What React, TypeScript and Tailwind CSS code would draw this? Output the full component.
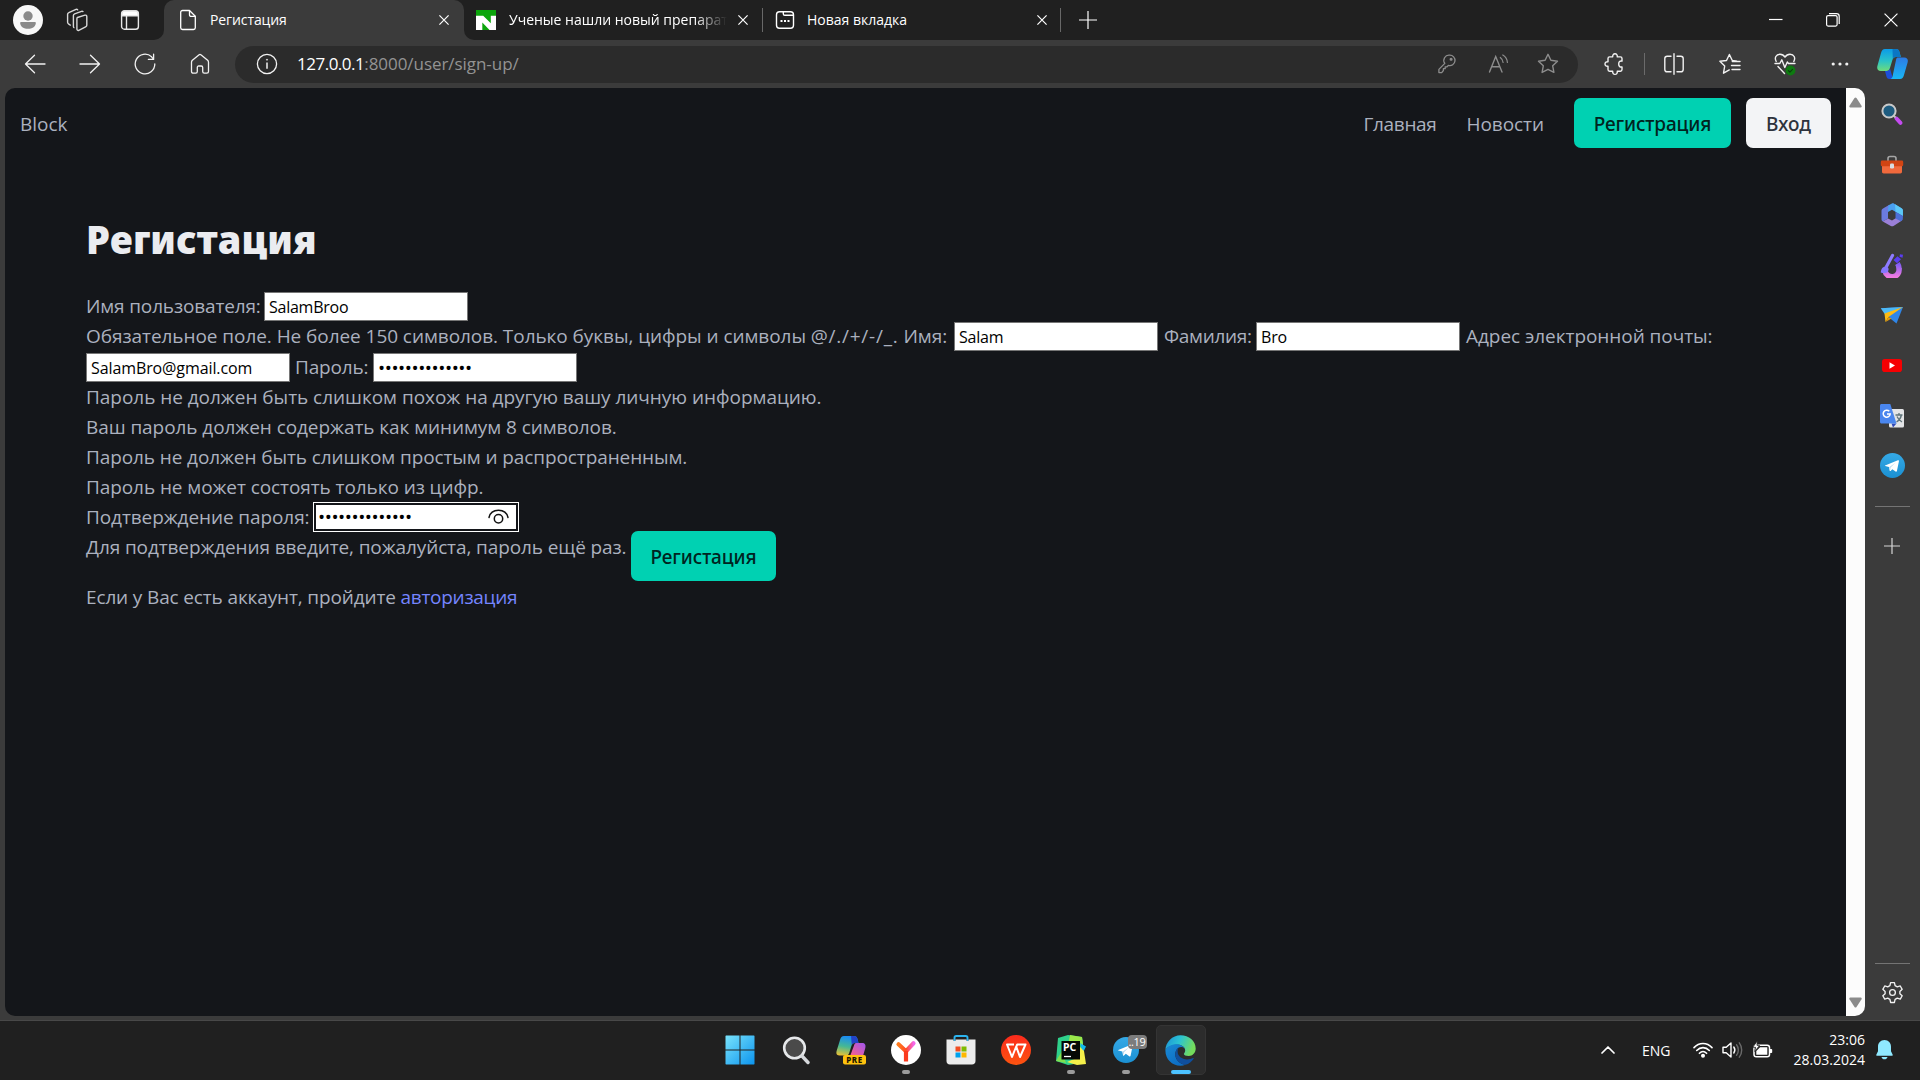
import type { ReactNode, SVGProps } from "react";

/* ---------- helpers ---------- */

function Line({ size = 20, children, ...rest }: { size?: number; children: ReactNode } & SVGProps<SVGSVGElement>) {
  return (
    <svg
      width={size}
      height={size}
      viewBox="0 0 24 24"
      fill="none"
      stroke="currentColor"
      strokeWidth={1.5}
      strokeLinecap="round"
      strokeLinejoin="round"
      className="shrink-0"
      {...rest}
    >
      {children}
    </svg>
  );
}

function Cross({ size = 10, width = 1.2 }: { size?: number; width?: number }) {
  return (
    <svg width={size} height={size} viewBox="0 0 10 10" stroke="#fff" strokeWidth={width} className="shrink-0">
      <path d="M0.4 0.4 9.6 9.6M9.6 0.4 0.4 9.6" />
    </svg>
  );
}

/* ---------- tab strip ---------- */

function TabStrip() {
  return (
    <div className="flex h-10 bg-linear-to-b from-[#202020] from-50% to-[#3b3b3b] to-50% text-white">
      <div className="flex w-[164px] shrink-0 items-center rounded-br-[10px] bg-[#202020] pl-[13px]">
        <svg width="30" height="30" viewBox="0 0 30 30">
          <circle cx="15" cy="15" r="15" fill="#f8f8f8" />
          <circle cx="15" cy="11" r="4.7" fill="#8a8a8a" />
          <path d="M8.2 17h13.6c.8 0 1.2.6 1 1.4-.6 3.6-3.6 5.300-7.800 5.300s-7.200-1.700-7.800-5.300c-.2-.8.2-1.400 1-1.400z" fill="#8a8a8a" />
        </svg>
        <svg width="22" height="24" viewBox="0 0 22 24" fill="none" stroke="#d8d8d8" strokeWidth="1.4" strokeLinejoin="round" className="ml-[23px]">
          <path d="M11.400 9.500 19 7.200c1-.3 1.800.3 1.800 1.200v8.900c0 .8-.5 1.300-1.200 1.600l-6.800 3.400c-1 .4-1.900-.1-1.900-1.200V10.700c0-.6 0-1 .5-1.200z" />
          <path d="M8.400 19.800c-.8-.2-1-.7-1-1.400V7.500c0-.9.400-1.400 1.200-1.700L15.500 3.300c.9-.3 1.500.1 1.600.9" />
          <path d="M4.800 17.500l-2-1.400c-.8-.5-1.200-1-1.200-1.800V6.300c0-.9.400-1.400 1.200-1.700L10 1.400c.9-.3 1.600 0 1.700.9" />
        </svg>
        <svg width="20" height="22" viewBox="0 0 20 22" fill="none" stroke="#e8e8e8" strokeWidth="1.4" className="ml-[32px]">
          <rect x="1.600" y="2" width="16.800" height="18.200" rx="2.800" />
          <path d="M2 4.500C2 3 3 2 4.500 2h11C17 2 18 3 18 4.500v2.300H2z" fill="#fff" />
          <path d="M6.500 7v13" />
        </svg>
      </div>

      <div className="flex w-[300px] shrink-0 items-center rounded-t-[10px] bg-[#3b3b3b] pr-[15px] pl-[15px]">
        <svg width="18" height="22" viewBox="0 0 18 22" fill="none" stroke="#fff" strokeWidth="1.300" strokeLinejoin="round">
          <path d="M10.500 1.500H3.500c-1 0-1.800.7-1.800 1.700v15.600c0 1 .8 1.700 1.800 1.700h11c1 0 1.800-.7 1.800-1.700V7.300z" />
          <path d="M10.500 1.500v4.300c0 1 .6 1.500 1.500 1.500h4.300" />
        </svg>
        <span className="ml-[13px] pb-[2px] text-[14px] tracking-[-0.1px]">Регистация</span>
        <span className="ml-auto flex">
          <Cross />
        </span>
      </div>

      <div className="flex grow rounded-bl-[10px] bg-[#202020]">
        <div className="flex w-[298px] items-center pr-[14px] pl-[12px]">
          <svg width="20" height="20" viewBox="0 0 20 20" className="shrink-0">
            <path d="M0 0h20v20H0z" fill="#fff" />
            <path d="M0 0h20v5.800h-5.200v7.400L7.200 5.800H0z" fill="#0ba50b" />
            <path d="M6.300 12.500 13.500 20H6.300z" fill="#0ba50b" />
          </svg>
          <span className="ml-[13px] w-[218px] overflow-hidden mask-r-from-85% pb-[2px] text-[14px] whitespace-nowrap">
            Ученые нашли новый препарат
          </span>
          <span className="ml-auto flex">
            <Cross />
          </span>
        </div>

        <div className="my-2 w-px bg-[#686868]" />

        <div className="flex w-[297px] items-center pr-[13px] pl-[12px]">
          <svg width="20" height="20" viewBox="0 0 20 20" fill="none" stroke="#fff" strokeWidth="1.400">
            <rect x="1.500" y="1.800" width="17" height="16.400" rx="3" />
            <path d="M8.300 2v1.700c0 1 .5 1.600 1.500 1.600h8.400" />
            <path d="M5.500 11h2M9 11h2M12.500 11h2" strokeWidth="1.800" />
          </svg>
          <span className="ml-[12px] pb-[2px] text-[14px]">Новая вкладка</span>
          <span className="ml-auto flex">
            <Cross />
          </span>
        </div>

        <div className="my-2 w-px bg-[#686868]" />

        <div className="ml-[18px] flex items-center">
          <svg width="18" height="18" viewBox="0 0 18 18" stroke="#fff" strokeWidth="1.200">
            <path d="M9 0v18M0 9h18" />
          </svg>
        </div>

        <div className="ml-auto flex items-center pr-[22px]">
          <svg width="14" height="14" viewBox="0 0 14 14" stroke="#fff">
            <path d="M0 6.500h13.500" strokeWidth="1.200" />
          </svg>
          <svg width="14" height="14" viewBox="0 0 14 14" fill="none" stroke="#fff" strokeWidth="1.200" className="ml-[43px]">
            <rect x=".6" y="2.600" width="10.500" height="10.500" rx="1.500" />
            <path d="M3 .6h7.500c1.600 0 2.700 1 2.700 2.700V11" />
          </svg>
          <span className="ml-[44px] flex">
            <Cross size={14} width={0.85} />
          </span>
        </div>
      </div>
    </div>
  );
}

/* ---------- toolbar ---------- */

function Slot({ className, children }: { className: string; children: ReactNode }) {
  return <div className={"flex shrink-0 items-center justify-center " + className}>{children}</div>;
}

function Toolbar() {
  return (
    <div className="flex h-12 items-center bg-[#3b3b3b] pl-[7px] text-white">
      <Slot className="w-[55px]">
        <svg width="22" height="22" viewBox="0 0 22 22" fill="none" stroke="#f2f2f2" strokeWidth="1.300" strokeLinecap="round" strokeLinejoin="round">
          <path d="M21 11H1.500M10.500 2.200 1.500 11l9 8.800" />
        </svg>
      </Slot>
      <Slot className="w-[55px]">
        <svg width="22" height="22" viewBox="0 0 22 22" fill="none" stroke="#f2f2f2" strokeWidth="1.300" strokeLinecap="round" strokeLinejoin="round">
          <path d="M1 11h19.500M11.500 2.200l9 8.800-9 8.800" />
        </svg>
      </Slot>
      <Slot className="w-[55px]">
        <svg width="22" height="22" viewBox="0 0 22 22" fill="none" stroke="#f2f2f2" strokeWidth="1.300" strokeLinecap="round" strokeLinejoin="round">
          <path d="M20.800 11A9.800 9.800 0 1 1 17.600 3.800L19.300 6" />
          <path d="M19.600 1.200v5.200h-5.200" />
        </svg>
      </Slot>
      <Slot className="w-[55px]">
        <svg width="20" height="22" viewBox="0 0 20 22" fill="none" stroke="#f2f2f2" strokeWidth="1.300" strokeLinejoin="round">
          <path d="M1.500 9.200c0-.8.300-1.400.9-1.900L8.800 1.900c.8-.7 1.600-.7 2.400 0l6.400 5.400c.6.500.9 1.100.9 1.900v9.300c0 1-.7 1.700-1.700 1.700h-2.500c-1 0-1.600-.7-1.600-1.600v-4.200c0-.9-.5-1.400-1.400-1.400H8.700c-.9 0-1.400.5-1.400 1.400v4.200c0 .9-.6 1.600-1.600 1.600H3.200c-1 0-1.700-.7-1.700-1.700z" />
        </svg>
      </Slot>

      <div className="ml-[8px] flex h-[37px] w-[1343px] shrink-0 items-center rounded-full bg-[#2b2b2b] pr-[6px] pl-[21px]">
        <svg width="22" height="22" viewBox="0 0 22 22" fill="none" stroke="#f2f2f2" strokeWidth="1.300">
          <circle cx="11" cy="11" r="9.600" />
          <path d="M11 9.500v6.200" strokeWidth="1.500" />
          <circle cx="11" cy="6.700" r=".6" fill="#f2f2f2" strokeWidth=".6" />
        </svg>
        <span className="ml-[19px] text-[17px] text-white">
          <span className="tracking-[-0.5px]">127.0.0.1</span>
          <span className="tracking-[-0.05px] text-[#939393]">:8000/user/sign-up/</span>
        </span>
        <div className="ml-auto flex text-[#8d8d8d]">
          <Slot className="w-[50px]">
            <svg width="18" height="20" viewBox="0 0 18 20" fill="none" stroke="currentColor" strokeWidth="1.300" strokeLinejoin="round">
              <path d="M11.600 1.200a5.200 5.200 0 1 1-1.200 10.200L9 12.800H7.200v1.900H5.400v1.800L3.700 18.600H.9v-3.200l5.900-6A5.200 5.200 0 0 1 11.600 1.200z" />
              <circle cx="13.100" cy="5.300" r=".9" fill="currentColor" />
            </svg>
          </Slot>
          <Slot className="w-[50px] pl-[3px]">
            <svg width="22" height="20" viewBox="0 0 22 20" fill="none" stroke="currentColor" strokeWidth="1.400" strokeLinecap="round">
              <path d="M1.500 18 7.700 2.500 14 18M3.600 12.700h8.300" />
              <path d="M12.300 3.500c1.800 1.400 2.700 3 2.800 5M14.800 1c2.900 1.700 4.400 4.200 4.600 7.500" strokeWidth="1.200" />
            </svg>
          </Slot>
          <Slot className="w-[50px] pl-px">
            <Line size={24} strokeWidth={1.4}>
              <path d="M12 2.300l2.900 6 6.600.9-4.800 4.600 1.200 6.600L12 17.300l-5.900 3.100 1.200-6.600L2.500 9.200l6.600-.9z" />
            </Line>
          </Slot>
        </div>
      </div>

      <Slot className="ml-[11px] w-[50px]">
        <svg width="21" height="24" viewBox="0 0 21 24" fill="none" stroke="#f2f2f2" strokeWidth="1.400" strokeLinejoin="round">
          <path d="M18 9V6.500c0-1-.6-1.600-1.600-1.600h-3.100c.2-2-.8-3.200-2.300-3.200S8.500 2.900 8.700 4.900H5.600C4.600 4.900 4 5.500 4 6.500v3.200C2 9.500 1 10.600 1 12s1 2.500 3 2.300v3.300c0 1 .6 1.600 1.600 1.600h3.100c-.2 2 .8 3.200 2.300 3.200s2.500-1.200 2.300-3.200h3.100c1 0 1.600-.6 1.600-1.600V15c-2.200.4-3.300-1-3.300-3s1.100-3.400 3.300-3z" />
        </svg>
      </Slot>
      <div className="ml-[5px] h-[22px] w-px shrink-0 bg-[#6b6b6b]" />
      <Slot className="w-[57px]">
        <svg width="20" height="22" viewBox="0 0 20 22" fill="none" stroke="#f2f2f2" strokeWidth="1.400" strokeLinecap="round">
          <path d="M10 .8v20.400M7 3.200H3.200C1.700 3.200.8 4.100.8 5.600v10.800c0 1.500.9 2.400 2.400 2.400H7M13 3.200h3.800c1.500 0 2.400.9 2.400 2.400v10.800c0 1.500-.9 2.400-2.400 2.400H13" />
        </svg>
      </Slot>
      <Slot className="w-[56px]">
        <svg width="22" height="22" viewBox="0 0 22 22" fill="none" stroke="#f2f2f2" strokeWidth="1.400" strokeLinecap="round" strokeLinejoin="round">
          <path d="M17.500 8.200 13.300 7.500 10.400 1.500 7.500 7.500.9 8.300l4.800 4.700-1.200 7.200 5.800-3.300" />
          <path d="M13.300 8.500H21M12.500 12.500H21M13 16.500h8" />
        </svg>
      </Slot>
      <Slot className="w-[54px]">
        <svg width="22" height="24" viewBox="0 0 22 24" fill="none" stroke="#f2f2f2" strokeWidth="1.400" strokeLinecap="round" strokeLinejoin="round">
          <path d="M2.200 9.500C.2 6 2 2.200 6 2.200c2.200 0 3.800 1 5 2.900 1.200-1.900 2.800-2.900 5-2.900 4 0 5.800 3.800 3.800 7.300" />
          <path d="M1 11.500h4.800l2-3.700 3 7.700 2.500-5.500 1.200 1.500H21M4 14.500l6.500 7" />
          <circle cx="16.500" cy="18.500" r="4.900" fill="#0e7a10" stroke="none" />
          <path d="M14.400 18.600l1.500 1.500 2.600-2.800" stroke="#0a3d0c" strokeWidth="1.100" />
        </svg>
      </Slot>
      <Slot className="w-[56px]">
        <svg width="18" height="4" viewBox="0 0 18 4" fill="#f2f2f2">
          <circle cx="2.200" cy="2" r="1.600" />
          <circle cx="9" cy="2" r="1.600" />
          <circle cx="15.800" cy="2" r="1.600" />
        </svg>
      </Slot>
      <Slot className="w-[48px]">
        <svg width="31" height="31" viewBox="0 0 31 31">
          <defs>
            <linearGradient id="cp1" x1="0" y1="0" x2="0" y2="1">
              <stop offset="0" stopColor="#0c9be8" />
              <stop offset=".55" stopColor="#2ac3c8" />
              <stop offset="1" stopColor="#6fdc7a" />
            </linearGradient>
            <linearGradient id="cp2" x1="0" y1="0" x2="0" y2="1">
              <stop offset="0" stopColor="#2d7be5" />
              <stop offset="1" stopColor="#19b7f5" />
            </linearGradient>
          </defs>
          <path d="M8 0h11c2 0 3 1 3.500 3l1.300 5H19c-2 0-3 1-3.600 3l-2.600 8.500c-.6 1.700-1.500 2.500-3.300 2.500H3.800C.8 22-.3 20 .4 17L4 4C4.800 1.200 5.800 0 8 0z" fill="url(#cp1)" />
          <path d="M15.500 0H19c2 0 3 1 3.500 3l1.300 5H19c-1.500 0-2.500.6-3.200 2z" fill="#0b76c4" />
          <path d="M8 22h2c1.500 0 2.500-1 3-2.500L16 30h-3.500c-2 0-2.700-1-3.200-3z" fill="#1d4fd8" />
          <path d="M20.500 8.500h6.700c3 0 4.200 2 3.400 5L27 26c-.8 2.800-1.800 4-4 4H12.500c1.500 0 2.400-.8 3-2.600L19 11c.3-1.400.8-2.200 1.500-2.500z" fill="url(#cp2)" />
        </svg>
      </Slot>
    </div>
  );
}

/* ---------- web page ---------- */

function Field({ className, children }: { className: string; children: ReactNode }) {
  return (
    <span className={"flex h-[29px] shrink-0 items-center border border-[#767676] bg-white pl-[4px] text-[16px] leading-[26px] text-black " + className}>
      {children}
    </span>
  );
}

function Dots() {
  return <span className="text-[19px] tracking-[-0.45px]">••••••••••••••</span>;
}

function SignUpPage() {
  return (
    <div className="h-[928px] w-[1841px] rounded-l-[10px] bg-[#14161a] text-[19px] leading-[30px] text-[#abb1bf]">
      <nav className="flex h-[70px] items-center pr-[15px] pl-[15px]">
        <span className="pt-px">Block</span>
        <span className="ml-auto pt-px tracking-[-0.35px]">Главная</span>
        <span className="ml-[30px] pt-px tracking-[-0.05px]">Новости</span>
        <span className="ml-[30px] flex h-[50px] w-[157px] items-center justify-center rounded-[7px] bg-[#00d1b2] pt-[2px] font-['Noto_Sans'] font-medium tracking-[-0.1px] text-[#00241f]">
          Регистрация
        </span>
        <span className="ml-[15px] flex h-[50px] w-[85px] items-center justify-center rounded-[7px] bg-[#f3f4f6] pt-[2px] font-['Noto_Sans'] font-medium text-[#2e333d]">
          Вход
        </span>
      </nav>

      <main className="pt-[56px] pl-[81px] whitespace-nowrap">
        <h1 className="h-[77px] font-['Noto_Sans'] text-[38px] leading-[50px] font-black tracking-[0.12px] text-[#ebecf0]">Регистация</h1>

        <div className="flex h-[30px] items-center">
          <span className="w-[178px] tracking-[-0.15px]">Имя пользователя:</span>
          <Field className="w-[204px]">
            <span className="pt-px tracking-[-0.25px]">SalamBroo</span>
          </Field>
        </div>
        <div className="flex h-[31px] items-start">
          <span className="w-[868px]">
            <span className="tracking-[-0.06px]">Обязательное поле. Не более 150 символов. Только буквы, цифры и символы </span>
            <span className="tracking-[0.75px]">@/./+/-/_.</span> Имя:
          </span>
          <Field className="mt-px w-[204px]">
            <span className="tracking-[-0.2px]">Salam</span>
          </Field>
          <span className="ml-[6px] w-[92px] tracking-[-0.3px]">Фамилия:</span>
          <Field className="mt-px w-[204px]">
            <span className="tracking-[-0.2px]">Bro</span>
          </Field>
          <span className="ml-[6px] tracking-[-0.05px]">Адрес электронной почты:</span>
        </div>
        <div className="flex h-[30px] items-center">
          <Field className="mt-px w-[204px]">
            <span className="tracking-[-0.1px]">SalamBro@gmail.com</span>
          </Field>
          <span className="ml-[5px] w-[78px] tracking-[-0.15px]">Пароль:</span>
          <Field className="mt-px w-[204px]">
            <Dots />
          </Field>
        </div>
        <p className="tracking-[-0.035px]">Пароль не должен быть слишком похож на другую вашу личную информацию.</p>
        <p className="tracking-[-0.07px]">Ваш пароль должен содержать как минимум 8 символов.</p>
        <p className="tracking-[-0.1px]">Пароль не должен быть слишком простым и распространенным.</p>
        <p className="tracking-[-0.08px]">Пароль не может состоять только из цифр.</p>
        <div className="flex h-[30px] items-center">
          <span className="w-[230px] tracking-[-0.09px]">Подтверждение пароля:</span>
          <span className="flex h-[24px] w-[200px] items-center bg-white pr-[7px] pl-[2px] text-black outline-1 outline-offset-2 outline-white">
            <Dots />
            <svg width="21" height="16" viewBox="0 0 21 16" fill="none" stroke="#111" strokeWidth="1.500" strokeLinecap="round" className="ml-auto">
              <path d="M1 8.500C2 4 5.500 1.300 10.500 1.300S19 4 20 8.500" />
              <circle cx="10.500" cy="9.700" r="4.200" />
            </svg>
          </span>
        </div>
        <div className="flex h-[50px] items-start">
          <span className="w-[545px] tracking-[-0.11px]">Для подтверждения введите, пожалуйста, пароль ещё раз.</span>
          <span className="-mt-px flex h-[50px] w-[145px] items-center justify-center rounded-[7px] bg-[#00d1b2] pt-[2px] font-['Noto_Sans'] font-medium tracking-[-0.1px] text-[#00241f]">
            Регистация
          </span>
        </div>
        <p className="tracking-[-0.14px]">
          Если у Вас есть аккаунт, пройдите <span className="tracking-[-0.28px] text-[#7585ff]">авторизация</span>
        </p>
      </main>
    </div>
  );
}

function Scrollbar() {
  return (
    <div className="flex h-[928px] w-[19px] flex-col items-center justify-between rounded-r-[10px] bg-[#fcfcfc] pt-[9px] pb-[8px]">
      <svg width="13" height="11" viewBox="0 0 13 11" fill="#8b8b8b">
        <path d="M5.500 1c.6-.8 1.400-.8 2 0l5 7.800c.5.900.1 1.700-.9 1.700H1.400c-1 0-1.400-.8-.9-1.700z" />
      </svg>
      <svg width="13" height="11" viewBox="0 0 13 11" fill="#8b8b8b">
        <path d="M5.500 10c.6.8 1.400.8 2 0l5-7.800c.5-.9.1-1.700-.9-1.700H1.400c-1 0-1.400.8-.9 1.700z" />
      </svg>
    </div>
  );
}

/* ---------- browser sidebar ---------- */

function TelegramMark({ size, id }: { size: number; id: string }) {
  return (
    <svg width={size} height={size} viewBox="0 0 26 26" className="shrink-0">
      <defs>
        <linearGradient id={id} x1="0" y1="0" x2="0" y2="1">
          <stop offset="0" stopColor="#35a9e6" />
          <stop offset="1" stopColor="#1b90d2" />
        </linearGradient>
      </defs>
      <circle cx="13" cy="13" r="13" fill={"url(#" + id + ")"} />
      <path d="M5.300 12.900 18.600 7.500c.7-.3 1.300.2 1.100 1l-2.100 10.300c-.2.800-.8 1-1.400.5l-3.400-2.500-1.800 1.800c-.5.400-.9.200-1-.4l-.7-3.600-3.900-1.200c-.7-.2-.8-.3-.1-.5z" fill="#fff" />
      <path d="M9.500 14.700 16.300 10 11 15.200l-.4 2.700z" fill="#b9d9ef" />
    </svg>
  );
}

function Sidebar() {
  return (
    <aside className="flex w-[55px] flex-col items-center bg-[#3b3b3b] pr-px">
      <Slot className="mt-px h-[50px]">
        <svg width="24" height="24" viewBox="0 0 24 24" fill="none">
          <path d="M16.500 16.500 20.500 20.800" stroke="#c44bf0" strokeWidth="4" strokeLinecap="round" />
          <path d="M13.500 13.500l2 2" stroke="#bdbdbd" strokeWidth="2" />
          <circle cx="9" cy="9" r="6.600" fill="#1e5c80" stroke="#c9c9c9" strokeWidth="2" />
        </svg>
      </Slot>
      <Slot className="h-[51px]">
        <svg width="24" height="20" viewBox="0 0 24 20">
          <path d="M8 6V3.500C8 2.300 8.800 1.500 10 1.500h4c1.200 0 2 .8 2 2V6" fill="none" stroke="#a6a6a6" strokeWidth="1.600" />
          <path d="M2 9h20v7.700c0 1-.7 1.700-1.700 1.700H3.700c-1 0-1.700-.7-1.700-1.700z" fill="#f0693c" />
          <rect x=".8" y="5.500" width="22.400" height="5.800" rx="1.400" fill="#d14413" />
          <rect x="10" y="8.500" width="4" height="5" rx="1.200" fill="#d9dde0" />
        </svg>
      </Slot>
      <Slot className="h-[50px]">
        <svg width="22" height="24" viewBox="0 0 22 24">
          <path d="M7 2.500 10.500.7c1-.5 1.800-.4 2.700.1l7.300 4.400c1 .6 1.400 1.300 1.400 2.400V13l-7.400-4.300L11 6.700 7 9z" fill="#4a9ff0" />
          <path d="M14 1.300l6.500 3.900c1 .6 1.400 1.300 1.400 2.400V13l-7.400-4.300z" fill="#5cc8f7" />
          <path d="M8 2 2 5.600C1 6.200.5 7 .5 8.100v8.200c0 1 .5 1.800 1.300 2.300L7 15.500v-8C7 5 7.400 3.200 8 2z" fill="#6b7be0" />
          <path d="M1.800 18.600 7 15.500l4 2 4.500-2.700 6 1.200c-.3 1-.9 1.800-1.700 2.300l-7.300 4.600c-.9.500-1.700.5-2.700 0z" fill="#9b80d8" />
          <path d="M14.500 8.700 21.900 13v2c0 1.500-.8 2.800-2 3.300L14.500 15.500z" fill="#4c6fd6" />
        </svg>
      </Slot>
      <Slot className="h-[50px]">
        <svg width="24" height="26" viewBox="0 0 24 26" fill="none">
          <defs>
            <linearGradient id="paint" x1="0" y1="0" x2="0" y2="1">
              <stop offset="0" stopColor="#7c5cf5" />
              <stop offset="1" stopColor="#f07be0" />
            </linearGradient>
          </defs>
          <path d="M5 19a7 7 0 0 0 14-2.500c0-2-.6-3.600-1.600-5" stroke="url(#paint)" strokeWidth="5.500" />
          <path d="M12.500 3.500 6.500 14.500" stroke="#8e7bff" strokeWidth="3.200" strokeLinecap="round" />
          <path d="M.8 20.500c.3-3.800 1.900-6 5-6 2.600 0 3.700 2.900 2.100 4.900-1.500 1.800-4.400 2-7.100 1.100z" fill="#8577ff" />
          <path d="M13.500 8l4-3.800 3.500 3-4 4zM20 2.200l3 .5-.5 3-3-1z" fill="#5a3df0" />
        </svg>
      </Slot>
      <Slot className="h-[50px]">
        <svg width="24" height="20" viewBox="0 0 24 20">
          <path d="M.8 3.200 23 2 16.500 18.500l-5-4z" fill="#2f86e8" />
          <path d="M.8 3.200 23 2 5 9.500z" fill="#4db9f6" />
          <path d="M4.500 8.500 23 2 8.500 12 5.500 17z" fill="#fdbb13" />
          <path d="M5.500 17l6-3.500L8.500 12z" fill="#e39a0c" />
        </svg>
      </Slot>
      <Slot className="h-[51px]">
        <svg width="20" height="13" viewBox="0 0 20 13">
          <rect width="20" height="13" rx="2.800" fill="#f60002" />
          <path d="M7.500 3.300 13 6.500 7.500 9.700z" fill="#fff" />
        </svg>
      </Slot>
      <Slot className="h-[49px]">
        <svg width="24" height="24" viewBox="0 0 24 24">
          <rect x="9" y="5" width="15" height="18.500" rx="1.500" fill="#e3e4e6" />
          <path d="M15.500 11h7M19 9v2M21.500 11c-.7 3-2.500 5.500-5 7M17 12.500c1 2.300 2.600 4.200 5 5.500" stroke="#5f7379" strokeWidth="1.300" fill="none" />
          <path d="M11.500 19.500h5L13 23.500z" fill="#2f48b8" />
          <path d="M1.500 0h8.800l6.200 19.500h-15C.6 19.500 0 18.900 0 18V1.500C0 .6.600 0 1.500 0z" fill="#4a86ee" />
          <path d="M9.300 7.300A3.500 3.500 0 1 0 10.200 10H7" fill="none" stroke="#fff" strokeWidth="1.500" />
        </svg>
      </Slot>
      <Slot className="h-[50px]">
        <TelegramMark size={25} id="telegramSide" />
      </Slot>
      <div className="mt-[16px] h-px w-[35px] bg-[#747474]" />
      <Slot className="mt-[31px] h-[16px]">
        <svg width="16" height="16" viewBox="0 0 16 16" stroke="#d6d6d6" strokeWidth="1.200">
          <path d="M8 0v16M0 8h16" />
        </svg>
      </Slot>
      <div className="mt-auto mb-[17px] h-px w-[35px] bg-[#747474]" />
      <div className="mb-[16px] flex">
        <Line size={23} stroke="#f2f2f2" strokeWidth={1.4}>
          <path d="M10 1.700h4l.7 3.200 2.300 1.300 3.100-1 2 3.500L19.700 11v2.200l2.400 2.200-2 3.500-3.100-1-2.300 1.300-.7 3.200h-4l-.7-3.200L7 17.900l-3.100 1-2-3.500 2.400-2.200V11L1.900 8.700l2-3.500 3.100 1 2.300-1.300z" />
          <circle cx="12" cy="12" r="3" />
        </Line>
      </div>
    </aside>
  );
}

/* ---------- taskbar ---------- */

function TaskItem({ mark, active, children }: { mark?: boolean; active?: boolean; children: ReactNode }) {
  return (
    <div className="flex w-[55px] shrink-0 justify-center">
      <div
        className={
          active
            ? "relative flex h-[50px] w-[50px] items-center justify-center rounded-[5px] border border-[#343434] bg-[#2c2c2c]"
            : "relative flex h-[50px] w-[50px] items-center justify-center"
        }
      >
        {children}
        {mark && <span className="absolute bottom-[1px] h-[4px] w-[8px] rounded-full bg-[#9b9b9b]" />}
        {active && <span className="absolute bottom-0 h-[4px] w-[20px] rounded-full bg-[#4cc2ff]" />}
      </div>
    </div>
  );
}

function Taskbar() {
  return (
    <footer className="flex h-[60px] items-center border-t border-[#484848] bg-[#202020] pb-px text-[14px] text-white">
      <div className="flex w-[1208px] justify-end">
        <TaskItem>
          <svg width="30" height="30" viewBox="0 0 30 30" className="-ml-px">
            <defs>
              <linearGradient id="win" gradientUnits="userSpaceOnUse" x1="0" y1="0" x2="30" y2="30">
                <stop offset="0" stopColor="#7be4fb" />
                <stop offset="1" stopColor="#0a93ee" />
              </linearGradient>
            </defs>
            <path d="M1 .5h13.500v14H.5V1zM15.500.5H29l.5.500v13.500h-14zM.5 15.500h14v14H1L.5 29zM15.500 15.500h14V29l-.5.500H15.500z" fill="url(#win)" />
          </svg>
        </TaskItem>
        <TaskItem>
          <svg width="28" height="29" viewBox="0 0 28 29" fill="none">
            <circle cx="12.500" cy="12" r="10.300" fill="#4a4a4a" stroke="#e6e8ea" strokeWidth="2.600" />
            <path d="M20 20l6 6.500" stroke="#d5d8dc" strokeWidth="3.400" strokeLinecap="round" />
          </svg>
        </TaskItem>
        <TaskItem>
          <svg width="30" height="30" viewBox="0 0 30 30">
            <defs>
              <linearGradient id="pa" x1=".3" y1="0" x2=".1" y2="1">
                <stop offset="0" stopColor="#1b8df0" />
                <stop offset=".5" stopColor="#45b894" />
                <stop offset="1" stopColor="#f2c230" />
              </linearGradient>
              <linearGradient id="pb" x1="1" y1="0" x2="0" y2="1">
                <stop offset="0" stopColor="#a055f0" />
                <stop offset="1" stopColor="#f7628c" />
              </linearGradient>
            </defs>
            <path d="M8 1h10c2 0 3 1 3.500 3l1 4H19c-2 0-3 1-3.600 3l-2.200 7c-.6 1.700-1.500 2.500-3.300 2.500H3.500C.8 20.500-.1 19 .6 16L4 5c.8-2.800 1.800-4 4-4z" fill="url(#pa)" />
            <path d="M15 1h3c2 0 3 1 3.500 3l1 4H19c-1.500 0-2.500.6-3.200 2z" fill="#2242c7" />
            <path d="M20 8h6c3 0 4 2 3.300 5l-2 7H14.500L18 10.500c.4-1.400 1-2.200 2-2.500z" fill="url(#pb)" />
            <rect x="7" y="20" width="23" height="9.500" rx="2" fill="#ffc20e" />
            <text x="18.500" y="27.700" textAnchor="middle" fontSize="8" fontWeight="800" fill="#1b1500" fontFamily="Noto Sans" letterSpacing=".5">
              PRE
            </text>
          </svg>
        </TaskItem>
        <TaskItem mark>
          <svg width="30" height="30" viewBox="0 0 30 30" fill="none">
            <defs>
              <linearGradient id="ya" x1="0" y1="0" x2="1" y2="0">
                <stop offset="0" stopColor="#ff7a1a" />
                <stop offset=".5" stopColor="#ff4a24" />
                <stop offset="1" stopColor="#f566e8" />
              </linearGradient>
            </defs>
            <circle cx="15" cy="15" r="15" fill="#fff" />
            <path d="M7.500 9.300 15 16.200 22.500 8.300" stroke="url(#ya)" strokeWidth="4.200" strokeLinecap="round" strokeLinejoin="round" />
            <path d="M15 16v10.500" stroke="#fb3a1e" strokeWidth="4.200" />
          </svg>
        </TaskItem>
        <TaskItem>
          <svg width="30" height="30" viewBox="0 0 30 30">
            <path d="M8.500 6V2.800C8.500 1.600 9 1 10.200 1h9.600c1.200 0 1.700.6 1.700 1.800V6" fill="none" stroke="#2cb4ef" strokeWidth="1.900" />
            <path d="M.5 4.500h7V6h2V4.500h11V6h2V4.500h7V26c0 2.200-1.300 3.500-3.500 3.500H4C1.800 29.500.5 28.200.5 26z" fill="#ececec" />
            <path d="M9.500 11.500h5v5h-5z" fill="#f04e23" />
            <path d="M15.500 11.500h5v5h-5z" fill="#7fba00" />
            <path d="M9.500 17.500h5v5h-5z" fill="#00a3ee" />
            <path d="M15.500 17.500h5v5h-5z" fill="#feb800" />
          </svg>
        </TaskItem>
        <TaskItem>
          <svg width="30" height="30" viewBox="0 0 30 30" fill="none">
            <defs>
              <linearGradient id="wps" x1="0" y1="0" x2="0" y2="1">
                <stop offset="0" stopColor="#fb2a1c" />
                <stop offset="1" stopColor="#fc5410" />
              </linearGradient>
            </defs>
            <circle cx="15" cy="15" r="15" fill="url(#wps)" />
            <path d="M13 9.500H6L11 22l4.200-10.500L19 22l5.500-12.500h-8.300l-1.400 3.300" stroke="#fff" strokeWidth="2" strokeLinejoin="round" />
          </svg>
        </TaskItem>
        <TaskItem mark>
          <svg width="30" height="30" viewBox="0 0 30 30">
            <path d="M2 3 12 0l14 2 1 6-3 20-12 2L0 26z" fill="#2fd18b" />
            <path d="M14 0l12 2 1 8H12z" fill="#9be84a" />
            <path d="M24 8l6 3.500-3 6z" fill="#12b8f0" />
            <path d="M24 12l4 4 2 13-9 1-10-3 12-5z" fill="#f5f04a" />
            <path d="M0 26l6-10 4 12z" fill="#7fe04f" />
            <rect x="5.500" y="6" width="18.500" height="18.500" fill="#050805" />
            <path d="M8 21.500h7" stroke="#fff" strokeWidth="1.300" />
            <text x="7" y="15.700" fontSize="10.500" fontWeight="700" fill="#fff" fontFamily="Noto Sans">
              PC
            </text>
          </svg>
        </TaskItem>
        <TaskItem mark>
          <TelegramMark size={26} id="telegramTask" />
          <span className="absolute top-[10px] left-[27px] flex h-[14px] w-[19px] items-center justify-center rounded-[4px] bg-[#7c7c7c] text-[11px] leading-[14px] tracking-[-0.3px]">
            ..19
          </span>
        </TaskItem>
        <TaskItem active>
          <svg width="31" height="31" viewBox="0 0 31 31">
            <defs>
              <linearGradient id="ea" x1="0" y1="0" x2="1" y2=".3">
                <stop offset="0" stopColor="#1c8fd8" />
                <stop offset=".5" stopColor="#2bc3d2" />
                <stop offset="1" stopColor="#74dc5c" />
              </linearGradient>
              <linearGradient id="eb" x1="0" y1="0" x2=".7" y2="1">
                <stop offset="0" stopColor="#1a8ad4" />
                <stop offset="1" stopColor="#0c6cc4" />
              </linearGradient>
            </defs>
            <path d="M15.500.3C24 .3 30.700 6 30.700 13.500c0 4.300-3 7.500-7 7.500-3 0-4.800-1-4.800-2 0-.8 1.300-1.500 1.300-3.600 0-3-3.200-5.600-7.400-5.600C7 9.800 2 12 .4 15.500.4 7 7.500.3 15.500.3z" fill="url(#ea)" />
            <path d="M.4 15.500C1.800 11.500 6.500 9.200 11 9.200c4 0 7.600 1.800 9 4.500-1-1-2.400-1.600-4-1.600-3 0-5.700 3.200-5.700 7.300 0 5.600 5 9.700 10.200 10.400-1.600.6-3.300.9-5 .9C7 30.700.4 24.200.4 15.500z" fill="url(#eb)" />
            <path d="M10.300 19.400c0-3 1.300-5.600 3.300-6.800-.8 1.300-1 2.600-1 3.900 0 4.500 4.400 7.900 9.400 7.900 2.500 0 4.500-.6 6-1.400.5-.3.900.2.600.7-1.800 3-4.700 5.200-8.100 6.100-5.300-.7-10.200-4.900-10.200-10.400z" fill="#0f4f9e" />
          </svg>
        </TaskItem>
      </div>

      <div className="ml-auto flex items-center">
        <svg width="14" height="8" viewBox="0 0 14 8" fill="none" stroke="#fff" strokeWidth="1.700" strokeLinecap="round" strokeLinejoin="round">
          <path d="M1 7l6-6 6 6" />
        </svg>
        <span className="ml-[27px] w-[30px]">ENG</span>
        <svg width="20" height="16" viewBox="0 0 20 16" fill="none" stroke="#fff" strokeWidth="1.600" strokeLinecap="round" className="ml-[21px]">
          <path d="M1 5.600C6 .2 14 .2 19 5.600" />
          <path d="M3.700 8.500c3.600-3.800 9-3.800 12.600 0" />
          <path d="M6.400 11.300c2.200-2.200 5-2.200 7.200 0" />
          <circle cx="10" cy="13.800" r="1.200" fill="#fff" />
        </svg>
        <svg width="21" height="18" viewBox="0 0 21 18" fill="none" stroke="#fff" strokeWidth="1.400" strokeLinecap="round" strokeLinejoin="round" className="ml-[9px]">
          <path d="M1 6.300h3.200L9 2v14l-4.800-4.300H1z" />
          <path d="M11.800 6c1.300 1.800 1.300 4.200 0 6" />
          <path d="M14.500 3.800c2.500 3 2.500 7.400 0 10.400M17.300 1.800c3.200 4.200 3.200 10.200 0 14.400" stroke="#6a6a6a" />
        </svg>
        <svg width="21" height="17" viewBox="0 0 21 17" className="mb-px ml-[9px]">
          <rect x="2" y="4.200" width="15.500" height="11.600" rx="2.300" fill="none" stroke="#fff" strokeWidth="1.500" />
          <path d="M4.300 13.700V10l3.800-3.700h7.200v7.400z" fill="#fff" />
          <path d="M18 8h1c.8 0 1.200.4 1.200 1v2c0 .6-.4 1-1.200 1h-1z" fill="#fff" />
          <path d="M5.200 0 .8 6.300h2.700L2.800 10.500 7.600 4.400H5z" fill="#fff" stroke="#202020" strokeWidth=".8" />
        </svg>
        <div className="ml-[17px] flex w-[75px] flex-col items-end pb-px leading-[20px]">
          <span>23:06</span>
          <span>28.03.2024</span>
        </div>
        <svg width="17" height="20" viewBox="0 0 17 20" fill="#8fe9ff" className="mr-[27px] ml-[11px]">
          <path d="M8.500 0c-4 0-6.500 3-6.500 6.700v4.600L.4 14.500c-.3.700 0 1.300.8 1.300h14.600c.8 0 1.100-.6.8-1.300L15 11.300V6.700C15 3 12.500 0 8.500 0zM5.500 17h6c-.4 1.400-1.500 2.300-3 2.300S5.900 18.400 5.500 17z" />
        </svg>
      </div>
    </footer>
  );
}

export default function App() {
  return (
    <div className="h-[1080px] w-[1920px] overflow-hidden bg-[#3b3b3b] font-['Open_Sans','Noto_Sans',sans-serif]">
      <TabStrip />
      <Toolbar />
      <div className="flex h-[932px]">
        <div className="flex w-[1865px] pl-[5px]">
          <SignUpPage />
          <Scrollbar />
        </div>
        <Sidebar />
      </div>
      <Taskbar />
    </div>
  );
}
